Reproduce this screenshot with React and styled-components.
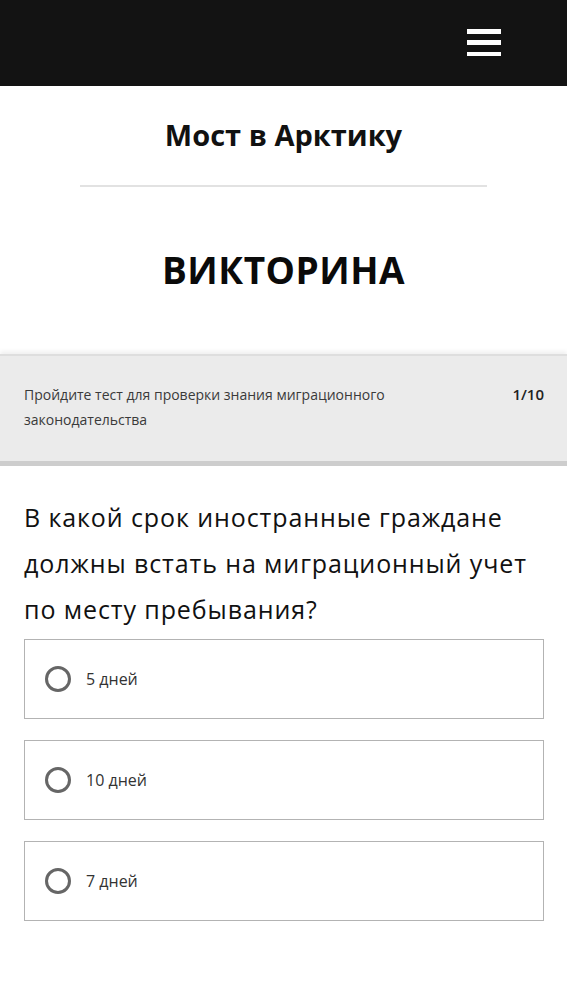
import React from 'react';
import styled, { createGlobalStyle } from 'styled-components';

const GlobalStyle = createGlobalStyle`
  body {
    margin: 0;
    background: #fff;
    font-family: 'Open Sans', 'Noto Sans', sans-serif;
  }
`;

const Header = styled.header`
  height: 86px;
  background: #131313;
  display: flex;
  justify-content: flex-end;
  align-items: center;
  padding: 0 66px 0 0;
`;

const Burger = styled.button`
  width: 34px;
  height: 27px;
  padding: 0;
  border: none;
  background: transparent;
  display: flex;
  flex-direction: column;
  justify-content: space-between;
  margin-top: -1px;

  span {
    display: block;
    height: 4.5px;
    background: #fff;
  }
`;

const Intro = styled.section`
  display: flex;
  flex-direction: column;
  align-items: center;
  padding: 29px 0 59px;
`;

const SiteTitle = styled.h1`
  margin: 0;
  font-size: 29px;
  line-height: 40px;
  font-weight: 700;
  color: #111;
`;

const Divider = styled.hr`
  width: 407px;
  margin: 30px 0 0;
  border: none;
  height: 2px;
  background: #e2e2e2;
`;

const PageTitle = styled.h2`
  margin: 58px 0 0;
  font-size: 37px;
  line-height: 50px;
  font-weight: 700;
  color: #0a0a0a;
  letter-spacing: 0.5px;
`;

const InfoBar = styled.div`
  display: flex;
  justify-content: space-between;
  align-items: flex-start;
  background: #ebebeb;
  padding: 26px 23px 29px 24px;
  border-top: 2px solid #dedede;
  border-bottom: 5px solid #cdcdcd;
  box-shadow: 0 -3px 4px rgba(0, 0, 0, 0.06);
`;

const InfoText = styled.p`
  margin: 0;
  max-width: 380px;
  font-size: 14px;
  line-height: 25px;
  color: #3a3a3a;
`;

const Counter = styled.span`
  font-size: 15px;
  line-height: 25px;
  font-weight: 600;
  color: #222;
`;

const Quiz = styled.main`
  padding: 28px 23px 40px 24px;
`;

const Question = styled.h3`
  margin: 0 0 7px;
  font-size: 25px;
  line-height: 46px;
  font-weight: 400;
  letter-spacing: 0.9px;
  color: #111;
`;

const Options = styled.div`
  display: flex;
  flex-direction: column;
  gap: 21px;
`;

const Option = styled.label`
  height: 80px;
  box-sizing: border-box;
  border: 1.5px solid #b3b3b3;
  display: flex;
  align-items: center;
  gap: 15px;
  padding-left: 20px;
  cursor: pointer;
`;

const Radio = styled.span`
  width: 26px;
  height: 26px;
  box-sizing: border-box;
  border-radius: 50%;
  border: 3px solid #666;
  flex-shrink: 0;
`;

const OptionText = styled.span`
  font-size: 16px;
  color: #333;
`;

const answers = ['5 дней', '10 дней', '7 дней'];

const App = () => {
  return (
    <>
      <GlobalStyle />
      <Header>
        <Burger aria-label="menu">
          <span />
          <span />
          <span />
        </Burger>
      </Header>
      <Intro>
        <SiteTitle>Мост в Арктику</SiteTitle>
        <Divider />
        <PageTitle>ВИКТОРИНА</PageTitle>
      </Intro>
      <InfoBar>
        <InfoText>
          Пройдите тест для проверки знания миграционного законодательства
        </InfoText>
        <Counter>1/10</Counter>
      </InfoBar>
      <Quiz>
        <Question>
          В какой срок иностранные граждане должны встать на миграционный учет
          по месту пребывания?
        </Question>
        <Options>
          {answers.map((answer) => (
            <Option key={answer}>
              <Radio />
              <OptionText>{answer}</OptionText>
            </Option>
          ))}
        </Options>
      </Quiz>
    </>
  );
};

export default App;
